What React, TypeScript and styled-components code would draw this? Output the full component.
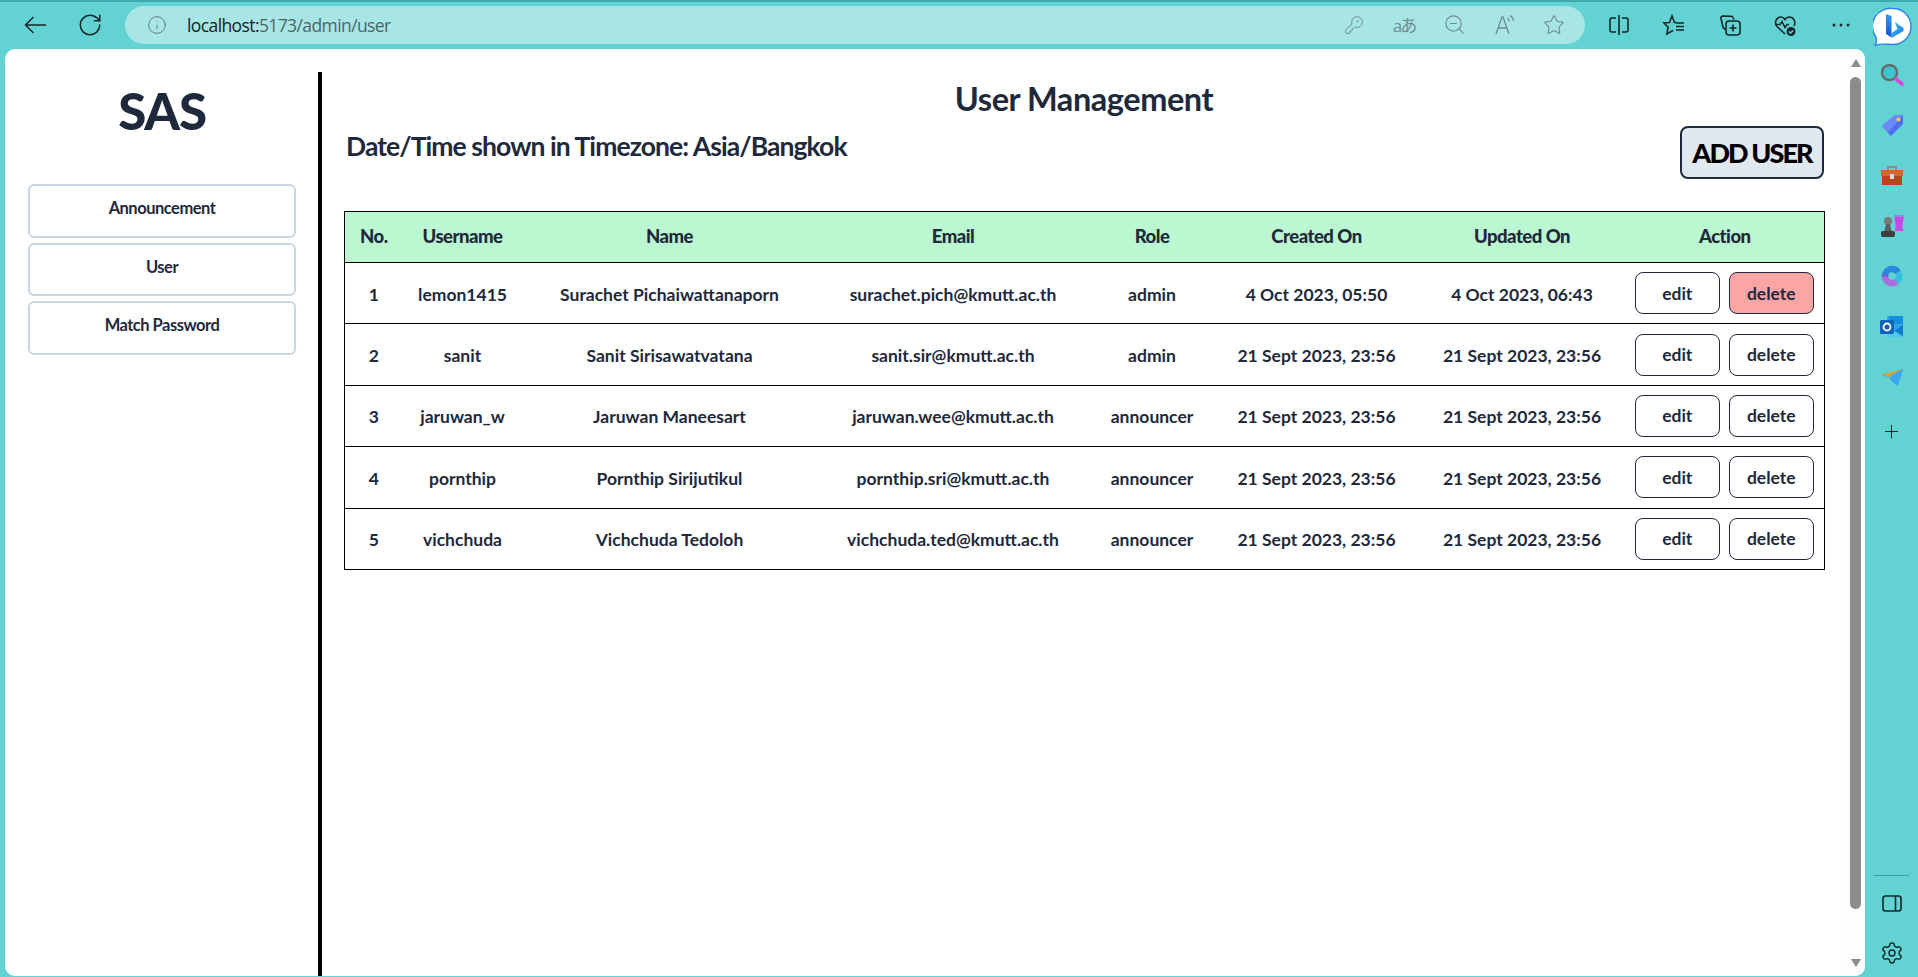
import React from 'react'
import styled, { createGlobalStyle } from 'styled-components'
import { RotateCw, Info, KeyRound, ZoomOut, Star, Plus, Settings } from 'lucide-react'

const GlobalStyle = createGlobalStyle`
  html, body {
    margin: 0;
    padding: 0;
    height: 100%;
    overflow: hidden;
    background: #62d2d3;
  }
  * {
    box-sizing: border-box;
  }
`

const Page = styled.div`
  width: 1918px;
  height: 977px;
  display: flex;
  flex-flow: column nowrap;
  background: #62d2d3;
  border-top: 2px solid #3fa9ab;
  font-family: Lato, 'Liberation Sans', sans-serif;
  color: #1e293b;
`

const TopBar = styled.div`
  height: 47px;
  flex: none;
  display: flex;
  align-items: center;
  padding: 0 0 2px 7px;
`

const ToolSlot = styled.div<{ $w: number; $muted?: boolean }>`
  width: ${(p) => p.$w}px;
  height: 38px;
  flex: none;
  display: flex;
  align-items: center;
  justify-content: center;
  color: ${(p) => (p.$muted ? '#6f8c8e' : '#14282a')};
`

const AddressBar = styled.div`
  width: 1460px;
  height: 38px;
  margin: 0 6px 0 8px;
  flex: none;
  display: flex;
  align-items: center;
  background: #a8e6e6;
  border-radius: 19px;
  padding: 0 6px 0 22px;
`

const Url = styled.div`
  flex: 1;
  margin-left: 20px;
  font-family: 'Open Sans', sans-serif;
  font-size: 17.5px;
  letter-spacing: -0.6px;
  color: #4b6668;
  span {
    color: #142425;
  }
`

const Translate = styled.span`
  font-family: 'Open Sans', 'Noto Sans CJK JP', sans-serif;
  font-size: 17px;
  letter-spacing: -2px;
  color: #6f8c8e;
`

const BingSlot = styled.div`
  width: 40px;
  height: 40px;
  margin: 2px 0 0 4px;
  flex: none;
`

const Body = styled.div`
  flex: 1;
  min-height: 0;
  display: flex;
`

const Window = styled.div`
  width: 1860px;
  margin: 0 0 1px 5px;
  flex: none;
  display: flex;
  background: #fff;
  border-radius: 10px;
  overflow: hidden;
`

const Side = styled.aside`
  width: 317px;
  flex: none;
  margin-top: 23px;
  padding: 0 22px 0 23px;
  border-right: 4px solid #000;
  display: flex;
  flex-flow: column nowrap;
`

const Logo = styled.h1`
  margin: 0 0 23px;
  height: 89px;
  font-size: 51px;
  line-height: 78px;
  font-weight: 900;
  text-align: center;
  letter-spacing: -1.2px;
`

const NavList = styled.nav`
  display: flex;
  flex-flow: column nowrap;
  gap: 5px;
`

const NavItem = styled.div`
  height: 53.5px;
  border: 2px solid #cbd5e1;
  border-radius: 6px;
  text-align: center;
  padding-top: 11px;
  font-size: 16.5px;
  line-height: 22px;
  font-weight: 700;
  letter-spacing: -0.5px;
`

const Main = styled.main`
  flex: 1;
  min-width: 0;
  margin-top: 23px;
  padding: 0 23px 0 22px;
`

const Title = styled.h2`
  margin: 0;
  height: 54px;
  font-size: 32.5px;
  line-height: 54px;
  font-weight: 700;
  text-align: center;
  letter-spacing: -0.45px;
`

const HeadRow = styled.div`
  display: flex;
  justify-content: space-between;
  align-items: flex-start;
  height: 85px;
`

const ZoneText = styled.div`
  font-size: 26.5px;
  line-height: 40px;
  font-weight: 700;
  letter-spacing: -0.93px;
  padding-left: 2px;
`

const AddButton = styled.button`
  width: 144px;
  height: 53px;
  padding: 0;
  font-family: inherit;
  font-size: 27px;
  font-weight: 900;
  letter-spacing: -1.9px;
  white-space: nowrap;
  color: #000;
  background: #e2e8f0;
  border: 2px solid #1e293b;
  border-radius: 8px;
`

const Table = styled.table`
  width: 1480px;
  table-layout: fixed;
  border-collapse: collapse;
  border: 1px solid #000;
`

const Th = styled.th`
  height: 51px;
  background: #bbf7d0;
  font-size: 18.5px;
  font-weight: 900;
  letter-spacing: -0.5px;
  text-align: center;
  padding: 0 0 2px;
  border-bottom: 1px solid #000;
`

const Td = styled.td`
  height: 61.4px;
  font-size: 17.5px;
  font-weight: 700;
  text-align: center;
  padding: 2px 0 0;
  border-top: 1px solid #000;
`

const ActionWrap = styled.div`
  display: flex;
  justify-content: center;
  gap: 9px;
  margin-top: -2px;
  padding-right: 1px;
`

const RowButton = styled.button<{ $danger?: boolean }>`
  width: 85px;
  height: 42px;
  padding: 0;
  font-family: inherit;
  font-size: 17.5px;
  font-weight: 700;
  color: #1e293b;
  background: ${(p) => (p.$danger ? '#fca5a5' : '#fff')};
  border: 1px solid #1e293b;
  border-radius: 8px;
`

const Scrollbar = styled.div`
  width: 18px;
  flex: none;
  background: #fdfdfd;
  display: flex;
  flex-flow: column nowrap;
  align-items: center;
  padding: 10px 4px 9px 3px;
`

const Arrow = styled.div<{ $down?: boolean }>`
  width: 0;
  height: 0;
  flex: none;
  border-left: 5.5px solid transparent;
  border-right: 5.5px solid transparent;
  ${(p) => (p.$down ? 'border-top: 8px solid #8c8c8c;' : 'border-bottom: 8px solid #8c8c8c;')}
`

const Thumb = styled.div`
  flex: 1;
  width: 11px;
  margin: 10px 0 50px;
  background: #8c8c8c;
  border-radius: 6px;
`

const Rail = styled.div`
  flex: 1;
  display: flex;
  flex-flow: column nowrap;
  align-items: center;
  justify-content: space-between;
  padding-top: 1px;
`

const RailGroup = styled.div`
  width: 100%;
  display: flex;
  flex-flow: column nowrap;
  align-items: center;
`

const RailSlot = styled.div<{ $h?: number }>`
  width: 100%;
  height: ${(p) => p.$h || 50.3}px;
  flex: none;
  display: flex;
  align-items: center;
  justify-content: center;
  color: #14282a;
`

const RailLine = styled.div`
  width: 35px;
  height: 1px;
  background: #3f9fa1;
  margin-bottom: 3px;
`

const columns = [58, 120, 294, 273, 125, 204, 207, 199]
const headers = ['No.', 'Username', 'Name', 'Email', 'Role', 'Created On', 'Updated On', 'Action']

const users = [
  { no: 1, username: 'lemon1415', name: 'Surachet Pichaiwattanaporn', email: 'surachet.pich@kmutt.ac.th', role: 'admin', created: '4 Oct 2023, 05:50', updated: '4 Oct 2023, 06:43' },
  { no: 2, username: 'sanit', name: 'Sanit Sirisawatvatana', email: 'sanit.sir@kmutt.ac.th', role: 'admin', created: '21 Sept 2023, 23:56', updated: '21 Sept 2023, 23:56' },
  { no: 3, username: 'jaruwan_w', name: 'Jaruwan Maneesart', email: 'jaruwan.wee@kmutt.ac.th', role: 'announcer', created: '21 Sept 2023, 23:56', updated: '21 Sept 2023, 23:56' },
  { no: 4, username: 'pornthip', name: 'Pornthip Sirijutikul', email: 'pornthip.sri@kmutt.ac.th', role: 'announcer', created: '21 Sept 2023, 23:56', updated: '21 Sept 2023, 23:56' },
  { no: 5, username: 'vichchuda', name: 'Vichchuda Tedoloh', email: 'vichchuda.ted@kmutt.ac.th', role: 'announcer', created: '21 Sept 2023, 23:56', updated: '21 Sept 2023, 23:56' },
]

const lineIcon = { width: 24, height: 24, viewBox: '0 0 24 24', fill: 'none', stroke: 'currentColor', strokeWidth: 1.3 }

const BackArrow = () => (
  <svg {...lineIcon} strokeWidth={1.5}>
    <path d="M23 12H2.500M10.500 4 2.500 12l8 8" />
  </svg>
)

const ReadAloud = () => (
  <svg {...lineIcon}>
    <path d="M4 21 10 4h1l6 17M6.500 15h8.500M15 5c1.500.8 2.300 2 2.500 3.500M18 2.500c2.200 1.200 3.300 3 3.500 5.500" />
  </svg>
)

const SplitScreen = () => (
  <svg {...lineIcon} strokeWidth={1.6}>
    <path d="M12 2v20M9 5H5a2 2 0 0 0-2 2v10a2 2 0 0 0 2 2h4M15 5h4a2 2 0 0 1 2 2v10a2 2 0 0 1-2 2h-4" />
  </svg>
)

const Favorites = () => (
  <svg {...lineIcon} strokeWidth={1.6}>
    <path d="M14 9.500h-1.500L10 3 7.500 9.500 2 10l4.200 4.200L4.800 21 11 17.500" />
    <path d="M14 10h8M14 13.500h8M14 17h8" />
  </svg>
)

const Collections = () => (
  <svg {...lineIcon} strokeWidth={1.6}>
    <path d="M16 6.500 15 4.500a2 2 0 0 0-2-1.200L4.500 3A2 2 0 0 0 3 5.500L5 14c.3 1.200 1 2 3 2.500" />
    <rect x="8" y="8" width="14" height="14" rx="3" />
    <path d="M15 11.500v7M11.500 15h7" />
  </svg>
)

const Health = () => (
  <svg {...lineIcon} strokeWidth={1.6}>
    <path d="M12 21 4 13.500C1 10 3 4 8 4c2 0 3 1 4 2.500C13 5 14 4 16 4c5 0 7 5 5 9" />
    <path d="M2.500 11.500H7l2-3 3 6 2-3h2" />
    <circle cx="18" cy="18.500" r="4.500" fill="#14282a" stroke="none" />
    <path d="m16 18.500 1.500 1.500 2.500-2.500" stroke="#62d2d3" />
  </svg>
)

const Dots = () => (
  <svg width="18" height="4" viewBox="0 0 18 4" fill="#14282a">
    <circle cx="2" cy="2" r="1.500" />
    <circle cx="9" cy="2" r="1.500" />
    <circle cx="16" cy="2" r="1.500" />
  </svg>
)

const BingLogo = () => (
  <svg width="40" height="40" viewBox="0 0 40 40">
    <defs>
      <linearGradient id="bingStem" x1="0" y1="0" x2="0" y2="1">
        <stop offset="0" stopColor="#2f9bf0" />
        <stop offset="1" stopColor="#1a4fd8" />
      </linearGradient>
      <linearGradient id="bingLobe" x1="0" y1="0" x2="1" y2="1">
        <stop offset="0" stopColor="#35c8e8" />
        <stop offset="1" stopColor="#1e72e4" />
      </linearGradient>
    </defs>
    <path d="M20 2.500a18 18 0 0 1 0 36c-5 0-12-1.500-18 .8 1.800-3 1.800-6 .8-8.500A18 18 0 0 1 20 2.500Z" fill="#fff" stroke="#2b86e6" strokeWidth="1.400" />
    <path d="M13 8l5.500 2v21.500L13 28Z" fill="url(#bingStem)" />
    <path d="M22 16l8.500 6v3L18.500 32v-5l6-4-1.500-3.500Z" fill="url(#bingLobe)" />
  </svg>
)

const SearchExt = () => (
  <svg width="24" height="24" viewBox="0 0 24 24">
    <circle cx="9.500" cy="9.500" r="7.500" fill="#3fc4d2" stroke="#6a6a6a" strokeWidth="2.400" />
    <path d="m16 16 6 5" stroke="#d24be0" strokeWidth="3.600" strokeLinecap="round" />
  </svg>
)

const TagExt = () => (
  <svg width="24" height="24" viewBox="0 0 24 24">
    <path d="M15 2h7a1 1 0 0 1 1 1v8L11 23 2 13Z" fill="#4f6df0" />
    <path d="M15 2h7a1 1 0 0 1 1 1L8 19l-6-6Z" fill="#6a8bf7" />
    <circle cx="18.500" cy="6.500" r="2" fill="#f6cf3b" />
  </svg>
)

const ToolboxExt = () => (
  <svg width="24" height="24" viewBox="0 0 24 24">
    <path d="M8 6V3h8v3" fill="none" stroke="#8d8d8d" strokeWidth="1.800" />
    <path d="M1 6h22v6H1Z" fill="#e0622a" />
    <path d="M2 12h20v9H2Z" fill="#b8431c" />
    <rect x="10" y="10" width="4" height="5" fill="#d8d8d8" />
  </svg>
)

const ChessExt = () => (
  <svg width="26" height="24" viewBox="0 0 26 24">
    <path d="M16 1h2v2h1.500V1h1.500v2h1.500V1h2v6l-1 1v6l1 3h-9l1-3V8l-1-1Z" fill="#c44be8" />
    <circle cx="9" cy="7" r="4" fill="#7a7a7a" />
    <path d="M7 10h4l1.500 7h-7Z" fill="#5e5e5e" />
    <rect x="2" y="17" width="14" height="6" rx="2" fill="#3d3d3d" />
  </svg>
)

const CopilotExt = () => (
  <svg width="24" height="24" viewBox="0 0 24 24" fill="none" strokeWidth="6.400">
    <path d="M5 12a7 7 0 0 1 7-7c3 0 5 1.500 6 3.500" stroke="#2a86dc" />
    <path d="M18.500 9a7 7 0 0 1-2 8.500" stroke="#35bfe0" />
    <path d="M16.500 17.500A7 7 0 0 1 5 12" stroke="#a86ee0" />
    <path d="M5 13V10" stroke="#6f62d4" />
  </svg>
)

const OutlookExt = () => (
  <svg width="24" height="24" viewBox="0 0 24 24">
    <rect x="7" y="1" width="16" height="21" rx="1" fill="#28a8ea" />
    <path d="M9 1h14v8H9Z" fill="#1490df" />
    <path d="M7 12 23 22H7Z" fill="#50c8f4" />
    <path d="M23 10v11l-8-5.500Z" fill="#1278c8" />
    <rect x="0" y="5" width="14" height="14" rx="1.500" fill="#0f62b8" />
    <circle cx="7" cy="12" r="3.500" fill="none" stroke="#fff" strokeWidth="1.800" />
  </svg>
)

const PlaneExt = () => (
  <svg width="24" height="24" viewBox="0 0 24 24">
    <path d="M1 10 23 4 9 12Z" fill="#2b9be8" />
    <path d="M1 10 23 4 9 11l2 6-3-6Z" fill="#f2a21b" />
    <path d="M9 13 23 4 18 21l-7-5Z" fill="#3aa6ee" />
  </svg>
)

const SidePanelIcon = () => (
  <svg {...lineIcon} strokeWidth={1.6}>
    <rect x="3" y="4" width="18" height="15" rx="2.500" />
    <path d="M15.500 4v15" />
  </svg>
)

const addressIcons = [
  <KeyRound key="key" size={20} strokeWidth={1.2} />,
  <Translate key="translate">aあ</Translate>,
  <ZoomOut key="zoom" size={23} strokeWidth={1.2} />,
  <ReadAloud key="read" />,
  <Star key="star" size={22} strokeWidth={1.2} />,
]

const toolIcons = [
  <SplitScreen key="split" />,
  <Favorites key="favorites" />,
  <Collections key="collections" />,
  <Health key="health" />,
  <Dots key="dots" />,
]

const railIcons = [
  <SearchExt key="search" />,
  <TagExt key="tag" />,
  <ToolboxExt key="toolbox" />,
  <ChessExt key="chess" />,
  <CopilotExt key="copilot" />,
  <OutlookExt key="outlook" />,
  <PlaneExt key="plane" />,
]

export default function App() {
  return (
    <Page>
      <GlobalStyle />
      <TopBar>
        <ToolSlot $w={55}>
          <BackArrow />
        </ToolSlot>
        <ToolSlot $w={55}>
          <RotateCw size={26} strokeWidth={1.4} />
        </ToolSlot>
        <AddressBar>
          <Info size={20} strokeWidth={1.1} color="#5c7476" />
          <Url>
            <span>localhost:</span>5173/admin/user
          </Url>
          {addressIcons.map((icon, index) => (
            <ToolSlot $w={50} $muted key={index}>
              {icon}
            </ToolSlot>
          ))}
        </AddressBar>
        {toolIcons.map((icon, index) => (
          <ToolSlot $w={55.5} key={index}>
            {icon}
          </ToolSlot>
        ))}
        <BingSlot>
          <BingLogo />
        </BingSlot>
      </TopBar>
      <Body>
        <Window>
          <Side>
            <Logo>SAS</Logo>
            <NavList>
              <NavItem>Announcement</NavItem>
              <NavItem>User</NavItem>
              <NavItem>Match Password</NavItem>
            </NavList>
          </Side>
          <Main>
            <Title>User Management</Title>
            <HeadRow>
              <ZoneText>Date/Time shown in Timezone: Asia/Bangkok</ZoneText>
              <AddButton>ADD USER</AddButton>
            </HeadRow>
            <Table>
              <colgroup>
                {columns.map((width, index) => (
                  <col key={index} style={{ width }} />
                ))}
              </colgroup>
              <thead>
                <tr>
                  {headers.map((head) => (
                    <Th key={head}>{head}</Th>
                  ))}
                </tr>
              </thead>
              <tbody>
                {users.map((user, index) => (
                  <tr key={user.no}>
                    <Td>{user.no}</Td>
                    <Td>{user.username}</Td>
                    <Td>{user.name}</Td>
                    <Td>{user.email}</Td>
                    <Td>{user.role}</Td>
                    <Td>{user.created}</Td>
                    <Td>{user.updated}</Td>
                    <Td>
                      <ActionWrap>
                        <RowButton>edit</RowButton>
                        <RowButton $danger={index === 0}>delete</RowButton>
                      </ActionWrap>
                    </Td>
                  </tr>
                ))}
              </tbody>
            </Table>
          </Main>
          <Scrollbar>
            <Arrow />
            <Thumb />
            <Arrow $down />
          </Scrollbar>
        </Window>
        <Rail>
          <RailGroup>
            {railIcons.map((icon, index) => (
              <RailSlot key={index}>{icon}</RailSlot>
            ))}
            <RailSlot $h={58}>
              <Plus size={21} strokeWidth={1.2} />
            </RailSlot>
          </RailGroup>
          <RailGroup>
            <RailLine />
            <RailSlot $h={50}>
              <SidePanelIcon />
            </RailSlot>
            <RailSlot $h={48}>
              <Settings size={24} strokeWidth={1.4} />
            </RailSlot>
          </RailGroup>
        </Rail>
      </Body>
    </Page>
  )
}
